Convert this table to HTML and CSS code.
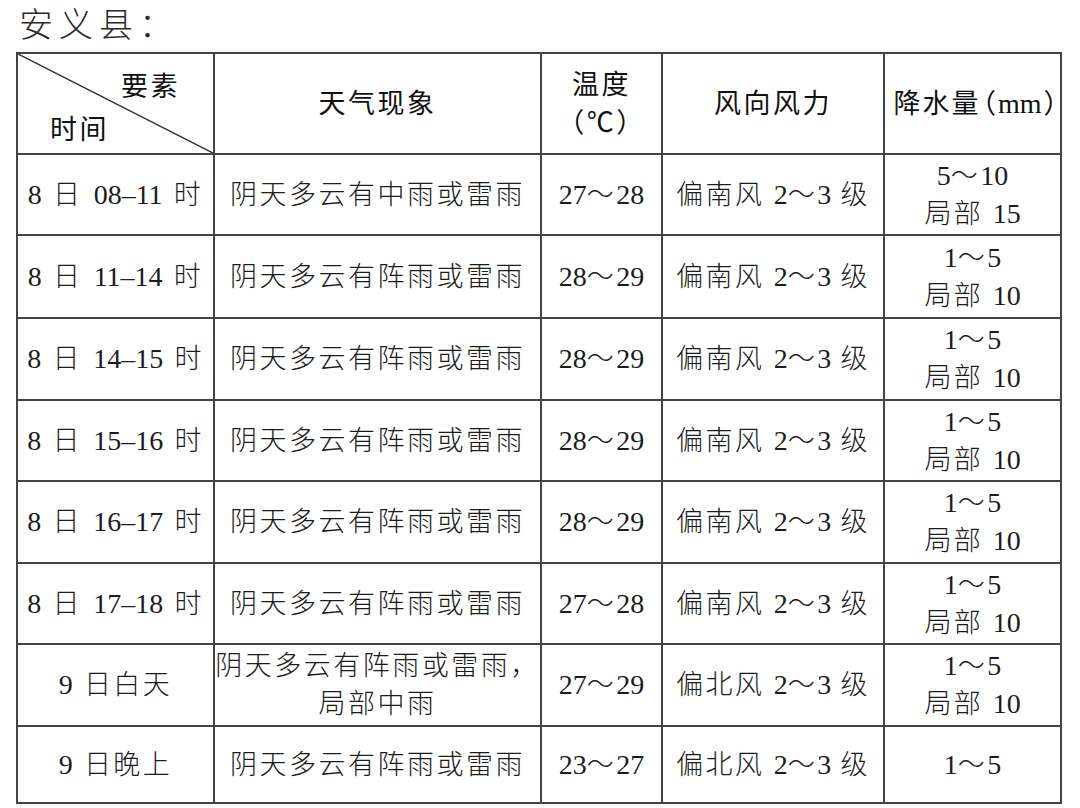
FILE: index.html
```html
<!DOCTYPE html>
<html lang="zh-CN">
<head>
<meta charset="utf-8">
<title>安义县</title>
<link rel="stylesheet" href="styles.css">
</head>
<body>
<h1 class="title">安义县：</h1>
<table class="forecast">
  <colgroup>
    <col class="c-time">
    <col class="c-weather">
    <col class="c-temp">
    <col class="c-wind">
    <col class="c-rain">
  </colgroup>
  <thead>
    <tr class="head-row">
      <th class="diag">
        <svg class="diag-line" viewBox="0 0 100 100" preserveAspectRatio="none"><line x1="0" y1="0" x2="100" y2="100" vector-effect="non-scaling-stroke"/></svg>
        <span class="diag-top">要素</span>
        <span class="diag-bottom">时间</span>
      </th>
      <th>天气现象</th>
      <th><span class="line">温度</span><span class="line">（℃）</span></th>
      <th>风向风力</th>
      <th class="rain-head">降水量<span class="paren">（</span><span class="n">mm</span><span class="paren">）</span></th>
    </tr>
  </thead>
  <tbody>
    <tr class="r1">
      <td class="time"><span class="n">8</span> 日 <span class="n">08–11</span> 时</td>
      <td>阴天多云有中雨或雷雨</td>
      <td><span class="n">27</span>～<span class="n">28</span></td>
      <td>偏南风 <span class="n">2</span>～<span class="n">3</span> 级</td>
      <td><span class="line"><span class="n">5</span>～<span class="n">10</span></span><span class="line">局部 <span class="n">15</span></span></td>
    </tr>
    <tr class="r2">
      <td class="time"><span class="n">8</span> 日 <span class="n">11–14</span> 时</td>
      <td>阴天多云有阵雨或雷雨</td>
      <td><span class="n">28</span>～<span class="n">29</span></td>
      <td>偏南风 <span class="n">2</span>～<span class="n">3</span> 级</td>
      <td><span class="line"><span class="n">1</span>～<span class="n">5</span></span><span class="line">局部 <span class="n">10</span></span></td>
    </tr>
    <tr class="r3">
      <td class="time"><span class="n">8</span> 日 <span class="n">14–15</span> 时</td>
      <td>阴天多云有阵雨或雷雨</td>
      <td><span class="n">28</span>～<span class="n">29</span></td>
      <td>偏南风 <span class="n">2</span>～<span class="n">3</span> 级</td>
      <td><span class="line"><span class="n">1</span>～<span class="n">5</span></span><span class="line">局部 <span class="n">10</span></span></td>
    </tr>
    <tr class="r4">
      <td class="time"><span class="n">8</span> 日 <span class="n">15–16</span> 时</td>
      <td>阴天多云有阵雨或雷雨</td>
      <td><span class="n">28</span>～<span class="n">29</span></td>
      <td>偏南风 <span class="n">2</span>～<span class="n">3</span> 级</td>
      <td><span class="line"><span class="n">1</span>～<span class="n">5</span></span><span class="line">局部 <span class="n">10</span></span></td>
    </tr>
    <tr class="r5">
      <td class="time"><span class="n">8</span> 日 <span class="n">16–17</span> 时</td>
      <td>阴天多云有阵雨或雷雨</td>
      <td><span class="n">28</span>～<span class="n">29</span></td>
      <td>偏南风 <span class="n">2</span>～<span class="n">3</span> 级</td>
      <td><span class="line"><span class="n">1</span>～<span class="n">5</span></span><span class="line">局部 <span class="n">10</span></span></td>
    </tr>
    <tr class="r6">
      <td class="time"><span class="n">8</span> 日 <span class="n">17–18</span> 时</td>
      <td>阴天多云有阵雨或雷雨</td>
      <td><span class="n">27</span>～<span class="n">28</span></td>
      <td>偏南风 <span class="n">2</span>～<span class="n">3</span> 级</td>
      <td><span class="line"><span class="n">1</span>～<span class="n">5</span></span><span class="line">局部 <span class="n">10</span></span></td>
    </tr>
    <tr class="r7">
      <td class="time"><span class="n">9</span> 日白天</td>
      <td class="wrap"><span class="line">阴天多云有阵雨或雷雨，</span><span class="line">局部中雨</span></td>
      <td><span class="n">27</span>～<span class="n">29</span></td>
      <td>偏北风 <span class="n">2</span>～<span class="n">3</span> 级</td>
      <td><span class="line"><span class="n">1</span>～<span class="n">5</span></span><span class="line">局部 <span class="n">10</span></span></td>
    </tr>
    <tr class="r8">
      <td class="time"><span class="n">9</span> 日晚上</td>
      <td>阴天多云有阵雨或雷雨</td>
      <td><span class="n">23</span>～<span class="n">27</span></td>
      <td>偏北风 <span class="n">2</span>～<span class="n">3</span> 级</td>
      <td><span class="n">1</span>～<span class="n">5</span></td>
    </tr>
  </tbody>
</table>
</body>
</html>
```

FILE: styles.css
```css
html, body {
  margin: 0;
  padding: 0;
  background: #ffffff;
}

body {
  font-family: "Liberation Serif", "Noto Sans CJK SC", serif;
  color: #1c1c1c;
}

.title {
  margin: 0;
  padding: 8px 0 0 19px;
  height: 52px;
  box-sizing: border-box;
  font-size: 34px;
  line-height: 36px;
  font-weight: 300;
  letter-spacing: 6px;
  color: #2a2a2a;
}

.forecast {
  margin-left: 16px;
  width: 1044px;
  table-layout: fixed;
  border-collapse: collapse;
  border: 2px solid #444;
}

.c-time { width: 197px; }
.c-weather { width: 327px; }
.c-temp { width: 121px; }
.c-wind { width: 222px; }
.c-rain { width: 177px; }

.forecast th,
.forecast td {
  border: 2px solid #444;
  padding: 0;
  text-align: center;
  vertical-align: middle;
  font-size: 27px;
  line-height: 38px;
  letter-spacing: 2.5px;
  white-space: nowrap;
  overflow: visible;
}

.forecast th {
  font-weight: 400;
  color: #111;
}

.forecast td {
  font-weight: 300;
}

.forecast .time {
  word-spacing: 2px;
}

.n {
  font-size: 28px;
  font-weight: 400;
  letter-spacing: 0;
}

.line {
  display: block;
}

.head-row { height: 101px; }
.r1 { height: 81px; }
.r2 { height: 83px; }
.r3 { height: 82px; }
.r4 { height: 81px; }
.r5 { height: 82px; }
.r6 { height: 81px; }
.r7 { height: 82px; }
.r8 { height: 77px; }

.diag {
  position: relative;
}

.diag-line {
  position: absolute;
  left: 0;
  top: 0;
  width: 100%;
  height: 100%;
}

.diag-line line {
  stroke: #333;
  stroke-width: 1.5;
}

.diag-top {
  position: absolute;
  right: 33px;
  top: 14px;
}

.diag-bottom {
  position: absolute;
  left: 32px;
  bottom: 4px;
}

.forecast .rain-head {
  text-align: right;
  letter-spacing: 2px;
  padding-right: 1px;
}

.paren {
  font-feature-settings: "halt";
  letter-spacing: 0;
  padding: 0 2px;
}
```
